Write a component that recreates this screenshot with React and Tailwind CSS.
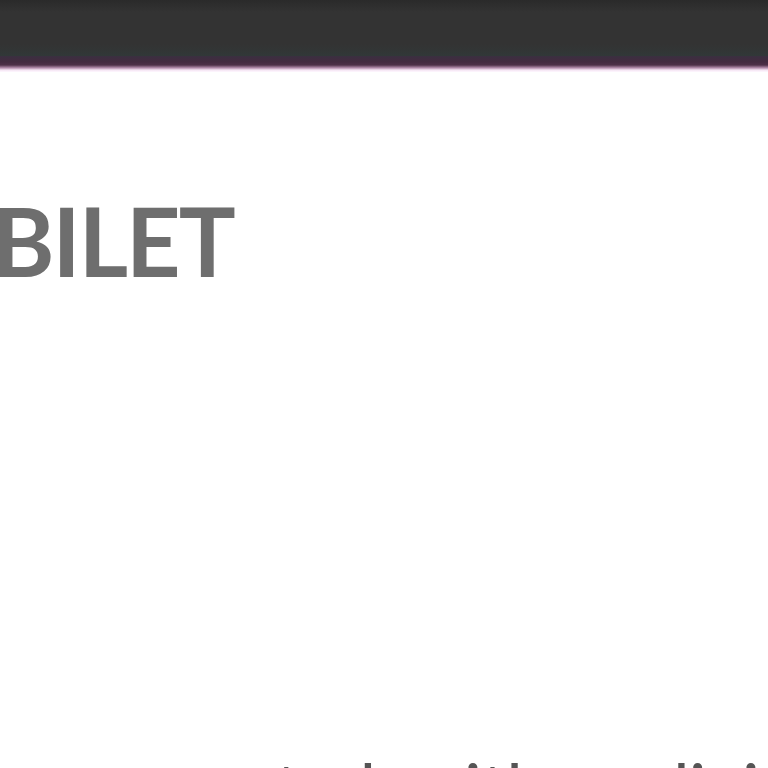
export default function App() {
  return (
    <div className="w-[768px] h-[768px] overflow-hidden bg-white" style={{ fontFamily: "Lato, 'Noto Sans', sans-serif" }}>
      <header className="h-[56px] bg-[linear-gradient(180deg,#2a2a2a_0px,#333333_12px,#333333_44px,#313838_56px)]" />
      <div className="h-[16px] bg-[linear-gradient(180deg,#3a3040_0px,#442a40_6px,#4e3048_9px,#b890b0_12px,#f4e4f2_14px,#fff8ff_16px)]" />
      <main className="flex flex-col">
        <h1 className="mt-[118px] -ml-[8px] text-[95px] leading-[100px] font-bold tracking-[-2px] text-[#6e6e6e] whitespace-nowrap">BILET</h1>
        <p className="mt-[457px] ml-[54px] text-[70px] leading-[80px] text-[#555] whitespace-nowrap [word-spacing:17px]">connected with a digital</p>
      </main>
    </div>
  );
}
